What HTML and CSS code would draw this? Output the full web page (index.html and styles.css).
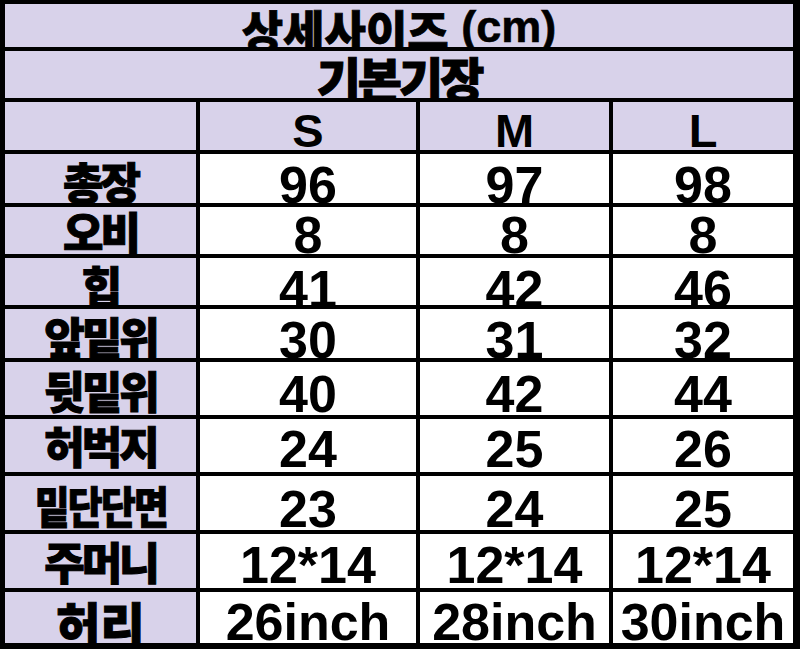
FILE: index.html
```html
<!DOCTYPE html>
<html lang="ko">
<head>
<meta charset="utf-8">
<title>상세사이즈</title>
<link rel="stylesheet" href="styles.css">
</head>
<body>
<div class="sheet">
  <div class="cell head span4 title"><span><b class="ko">상세사이즈</b> <b class="unit">(cm)</b></span></div>
  <div class="cell head span4 sub"><span>기본기장</span></div>
  <div class="cell head"></div>
  <div class="cell head size"><span>S</span></div>
  <div class="cell head size"><span>M</span></div>
  <div class="cell head size"><span>L</span></div>

  <div class="cell head label b0"><span>총장</span></div>
  <div class="cell val b0"><span>96</span></div>
  <div class="cell val b0"><span>97</span></div>
  <div class="cell val b0"><span>98</span></div>

  <div class="cell head label b1"><span>오비</span></div>
  <div class="cell val b1"><span>8</span></div>
  <div class="cell val b1"><span>8</span></div>
  <div class="cell val b1"><span>8</span></div>

  <div class="cell head label bn2"><span>힙</span></div>
  <div class="cell val bn2"><span>41</span></div>
  <div class="cell val bn2"><span>42</span></div>
  <div class="cell val bn2"><span>46</span></div>

  <div class="cell head label b0"><span>앞밑위</span></div>
  <div class="cell val b0"><span>30</span></div>
  <div class="cell val b0"><span>31</span></div>
  <div class="cell val b0"><span>32</span></div>

  <div class="cell head label b3"><span>뒷밑위</span></div>
  <div class="cell val b3"><span>40</span></div>
  <div class="cell val b3"><span>42</span></div>
  <div class="cell val b3"><span>44</span></div>

  <div class="cell head label b5"><span>허벅지</span></div>
  <div class="cell val b5"><span>24</span></div>
  <div class="cell val b5"><span>25</span></div>
  <div class="cell val b5"><span>26</span></div>

  <div class="cell head label b3"><span class="narrow">밑단단면</span></div>
  <div class="cell val b3"><span>23</span></div>
  <div class="cell val b3"><span>24</span></div>
  <div class="cell val b3"><span>25</span></div>

  <div class="cell head label b5"><span>주머니</span></div>
  <div class="cell val b5"><span>12*14</span></div>
  <div class="cell val b5"><span>12*14</span></div>
  <div class="cell val b5"><span>12*14</span></div>

  <div class="cell head label b0"><span class="wide">허리</span></div>
  <div class="cell val b3"><span>26inch</span></div>
  <div class="cell val b3"><span>28inch</span></div>
  <div class="cell val b3"><span>30inch</span></div>
</div>
</body>
</html>
```
FILE: styles.css
```css
html, body {
  margin: 0;
  padding: 0;
  background: #000;
}

.sheet {
  width: 800px;
  height: 649px;
  box-sizing: border-box;
  padding: 4px 7px 6px 5px;
  background: #000;
  display: grid;
  grid-template-columns: 191px 216px 189px 180px;
  grid-template-rows: 43px 47px 48px 49px 47px 47px 49px 53px 53px 54px 54px 51px;
  column-gap: 4px;
  row-gap: 4px;
  font-family: "Liberation Sans", "Noto Sans CJK KR", sans-serif;
  font-weight: bold;
  color: #000;
}

.cell {
  display: flex;
  align-items: flex-end;
  justify-content: center;
  overflow: hidden;
  background: #ffffff;
  --b: 0px;
}

.head {
  background: #d8d2ea;
}

.span4 {
  grid-column: 1 / -1;
}

.cell > span {
  display: block;
  line-height: 1;
  white-space: nowrap;
}

.b0 { --b: 0px; }
.b1 { --b: 1px; }
.bn2 { --b: -2px; }
.b3 { --b: 3px; }
.b5 { --b: 5px; }

.val > span {
  font-size: 52px;
  margin-bottom: calc(var(--b) - 8px);
}

.size > span {
  font-size: 47px;
  margin-bottom: -4px;
}

.label > span {
  font-family: "Noto Sans CJK KR", sans-serif;
  font-weight: 900;
  font-size: 44px;
  letter-spacing: -3px;
  margin-bottom: var(--b);
  -webkit-text-stroke: 1px #000;
}

.label > span.narrow {
  letter-spacing: -2px;
  transform: scaleX(0.86);
}

.label > span.wide {
  font-size: 48px;
  letter-spacing: 0;
  margin-bottom: -3px;
}

.title > span {
  font-size: 45px;
  margin-bottom: -9px;
}

.ko {
  font-family: "Noto Sans CJK KR", sans-serif;
  font-weight: 900;
  -webkit-text-stroke: 0.8px #000;
}

.unit {
  font-family: "Liberation Sans", sans-serif;
  font-weight: 700;
  vertical-align: 7px;
  -webkit-text-stroke: 0.6px #000;
}

.sub > span {
  font-family: "Noto Sans CJK KR", sans-serif;
  font-weight: 900;
  font-size: 48px;
  letter-spacing: -3px;
  margin-bottom: -3px;
  -webkit-text-stroke: 1px #000;
}
```
